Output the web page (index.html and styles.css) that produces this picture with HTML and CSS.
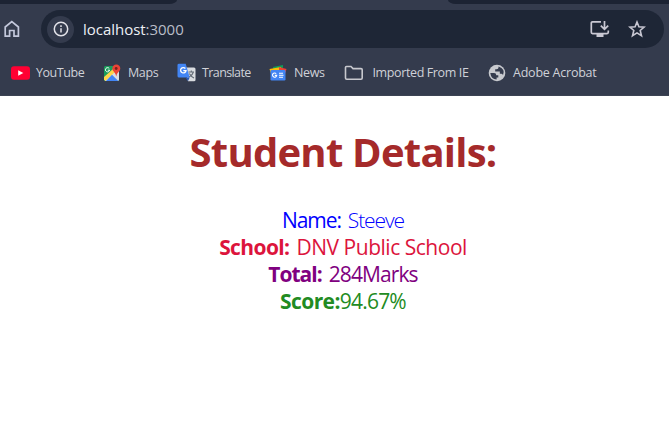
FILE: index.html
```html
<!DOCTYPE html>
<html lang="en">
<head>
<meta charset="utf-8">
<title>Student Details</title>
<link rel="stylesheet" href="styles.css">
</head>
<body>
<header class="browser">
  <div class="tabs"><span class="tab-left"></span><span class="tab-right"></span></div>
  <div class="toolbar">
    <svg class="home" width="16" height="18" viewBox="0 0 16 18"><path d="M1.2 7 7.8 1.6 14.4 7V16.2H10V10.5H5.6V16.2H1.2Z" fill="none" stroke="#c3c8db" stroke-width="1.7"/></svg>
    <div class="address">
      <span class="info"><svg width="16" height="16" viewBox="0 0 16 16"><circle cx="8" cy="8" r="6.7" fill="none" stroke="#e3e3e9" stroke-width="1.5"/><path d="M8 7.2V11.6M8 4.3V5.9" stroke="#e3e3e9" stroke-width="1.5"/></svg></span>
      <span class="url"><b>localhost</b>:3000</span>
      <svg class="install" width="20" height="18" viewBox="0 0 20 18"><path d="M11 1.8H2.5Q1.3 1.8 1.3 3V12.3Q1.3 13.6 2.5 13.6H17Q18.3 13.6 18.3 12.3V10.5" fill="none" stroke="#c9c8d3" stroke-width="1.7"/><path d="M6.5 14H13.5V17H6.5Z" fill="#c9c8d3"/><path d="M14.5 1V9M10.8 5.7 14.5 9.4 18.2 5.7" fill="none" stroke="#c9c8d3" stroke-width="1.7"/></svg>
      <svg class="star" width="18" height="18" viewBox="0 0 18 18"><path d="M9 2 10.9 6.7 16.2 7.1 12.2 10.5 13.5 15.7 9 12.9 4.5 15.7 5.8 10.5 1.8 7.1 7.1 6.7Z" fill="none" stroke="#c9c8d3" stroke-width="1.6"/></svg>
    </div>
  </div>
  <nav class="bookmarks">
    <a class="mark youtube"><svg width="19" height="14" viewBox="0 0 19 14"><rect width="19" height="13.4" y=".3" rx="3" fill="#ff0033"/><path d="M7.2 4.2 12.3 7 7.2 9.8Z" fill="#fff"/></svg><span>YouTube</span></a>
    <a class="mark maps"><svg width="18" height="18" viewBox="0 0 18 18"><rect x="1" y="2" width="15" height="15" rx="1.5" fill="#1a9c5b"/><path d="M1 15.5 14 3H16V15.5Q16 17 14.5 17H2.500Z" fill="#dadde2"/><path d="M1 13 10 5 12.500 7.500 2.500 17 1 15.500Z" fill="#ffd44a"/><path d="M3 17 9 10.800 15.300 17Z" fill="#4285f4"/><path d="M6.300 4.600A2.100 2.100 0 1 0 6.600 6.200H4.800" fill="none" stroke="#fff" stroke-width="1"/><path d="M13.200 12.500Q12.700 9.600 10.700 7.500A4 4 0 1 1 15.900 7.500Q13.700 9.600 13.200 12.500Z" fill="#ea4335"/><circle cx="13.200" cy="4.500" r="1.400" fill="#7b211c"/></svg><span>Maps</span></a>
    <a class="mark translate"><svg width="19" height="19" viewBox="0 0 19 19"><path d="M7 4.500H17Q18.500 4.500 18.500 6V17Q18.500 18.300 17 18.300H11Z" fill="#d9dce0"/><path d="M11.500 9H17M14.300 7.500V9M16.300 9Q15 13 11.500 14M12.300 10.500Q14 13.500 17 15" fill="none" stroke="#626a75" stroke-width="1.100"/><path d="M2 .7H8.700L12.700 14.500H2Q.5 14.500 .5 13V2Q.5 .7 2 .7Z" fill="#4285f4"/><path d="M8.500 14.500H12.700L11 18Z" fill="#2859b8"/><path d="M8.400 5.500A2.700 2.700 0 1 0 9 7.600H6.300" fill="none" stroke="#fff" stroke-width="1.300"/></svg><span>Translate</span></a>
    <a class="mark news"><svg width="18" height="16" viewBox="0 0 18 16"><path d="M4 2 14 0V9H5Z" fill="#0f9d58"/><path d="M.5 4 12 2V11L3 12Z" fill="#fbbc04"/><path d="M10 2 17.500 4 15 12H10Z" fill="#ea4335"/><rect x="1.500" y="5" width="15" height="10.500" rx="1.200" fill="#4285f4"/><path d="M7.200 8.700A2.100 2.100 0 1 0 7.700 10.400H5.800M10 8.300H14M10 10.300H14.500M10 12.300H14" fill="none" stroke="#fff" stroke-width="1.100"/></svg><span>News</span></a>
    <a class="mark imported"><svg width="20" height="16" viewBox="0 0 20 16"><path d="M1.500 13V2.500Q1.500 1.500 2.500 1.500H7L9 3.600H17Q18.200 3.600 18.200 4.800V13Q18.200 14.200 17 14.200H2.700Q1.500 14.200 1.500 13Z" fill="none" stroke="#c7c8ce" stroke-width="1.600"/></svg><span>Imported From IE</span></a>
    <a class="mark adobe"><svg width="18" height="18" viewBox="0 0 18 18"><circle cx="9" cy="9" r="8.300" fill="#c7c9ce"/><path d="M2.300 9H6Q8.300 9 8.300 11.200H10.300V13.500H8.600V15.600Q3 15 2.300 9ZM10.500 2.400V3.500Q10.500 5.300 8.600 5.300H7.200V7.400H11.800V9.800H13.500Q14.800 9.800 15 11.300Q17.800 5 10.500 2.400Z" fill="#343b4d"/></svg><span>Adobe Acrobat</span></a>
  </nav>
</header>
<main>
  <h1>Student Details:</h1>
  <div class="details">
    <p class="name"><span class="label">Name:</span><span class="value">Steeve</span></p>
    <p class="school"><span class="label">School:</span><span class="value">DNV Public School</span></p>
    <p class="total"><span class="label">Total:</span><span class="value">284Marks</span></p>
    <p class="score"><span class="label">Score:</span><span class="value">94.67%</span></p>
  </div>
</main>
</body>
</html>
```
FILE: styles.css
```css
* { box-sizing: border-box; }
body { margin: 0; background: #fff; font-family: "Segoe UI", "Open Sans", "Noto Sans", sans-serif; overflow: hidden; white-space: nowrap; }
.browser { height: 96px; background: #343b4d; border-bottom: 1px solid #3c4353; }
.tabs { height: 4px; display: flex; justify-content: space-between; }
.tab-left { width: 177px; background: #1c2333; border-bottom-right-radius: 8px 4px; }
.tab-right { width: 221px; background: #1c2333; border-bottom-left-radius: 8px 4px; }
.toolbar { height: 50px; padding: 6px 5px 6px 3.5px; display: flex; align-items: center; }
.home { flex: none; margin-right: 21.5px; }
.address { flex: 1; height: 38px; border-radius: 19px; background: #1e2636; display: flex; align-items: center; padding: 0 18px 0 6px; }
.info { width: 27px; height: 27px; border-radius: 50%; background: #343b4d; display: grid; place-items: center; }
.url { margin-left: 9px; font-size: 15px; line-height: 20px; color: #b9bdc8; letter-spacing: -.03px; }
.url b { font-weight: 400; color: #eef0f5; }
.install { margin-left: auto; }
.star { margin-left: 18px; }
.bookmarks { height: 37px; display: flex; align-items: center; padding-left: 11px; color: #cfd1d8; font-size: 12.5px; line-height: 18px; }
.mark { display: flex; align-items: center; flex: none; }
.mark svg { flex: none; margin-right: 6px; }
.youtube { width: 92px; letter-spacing: -.45px; }
.maps { width: 74px; letter-spacing: -.4px; }
.maps svg { margin-right: 7px; }
.translate { width: 92px; letter-spacing: -.6px; }
.news { width: 75px; letter-spacing: -.4px; }
.news svg { margin-right: 7px; }
.imported { width: 144px; letter-spacing: -.38px; }
.imported svg { margin-right: 8.5px; }
.adobe { letter-spacing: -.23px; }
.adobe svg { margin-right: 7px; }
main { padding-left: 17px; }
h1 { margin: 28px 0 0; height: 56px; line-height: 56px; font-size: 40px; font-weight: 700; text-align: center; color: #a52a2a; letter-spacing: -.77px; }
.details { margin-top: 27px; font-size: 21px; }
p { margin: 0; height: 27px; line-height: 27px; display: flex; justify-content: center; }
.label { font-weight: 700; flex: none; letter-spacing: -.6px; }
.value { flex: none; margin-left: 7px; letter-spacing: -.48px; }
.name { color: #0000ff; }
.name .label { font-weight: 400; letter-spacing: -1.1px; }
.name .value { font-weight: 300; letter-spacing: -1.1px; }
.school { color: #dc143c; }
.total { color: #800080; }
.total .label { letter-spacing: -1px; }
.total .value { letter-spacing: -.9px; }
.score { color: #228b22; }
.score .value { margin-left: 0; letter-spacing: -.8px; }
```
